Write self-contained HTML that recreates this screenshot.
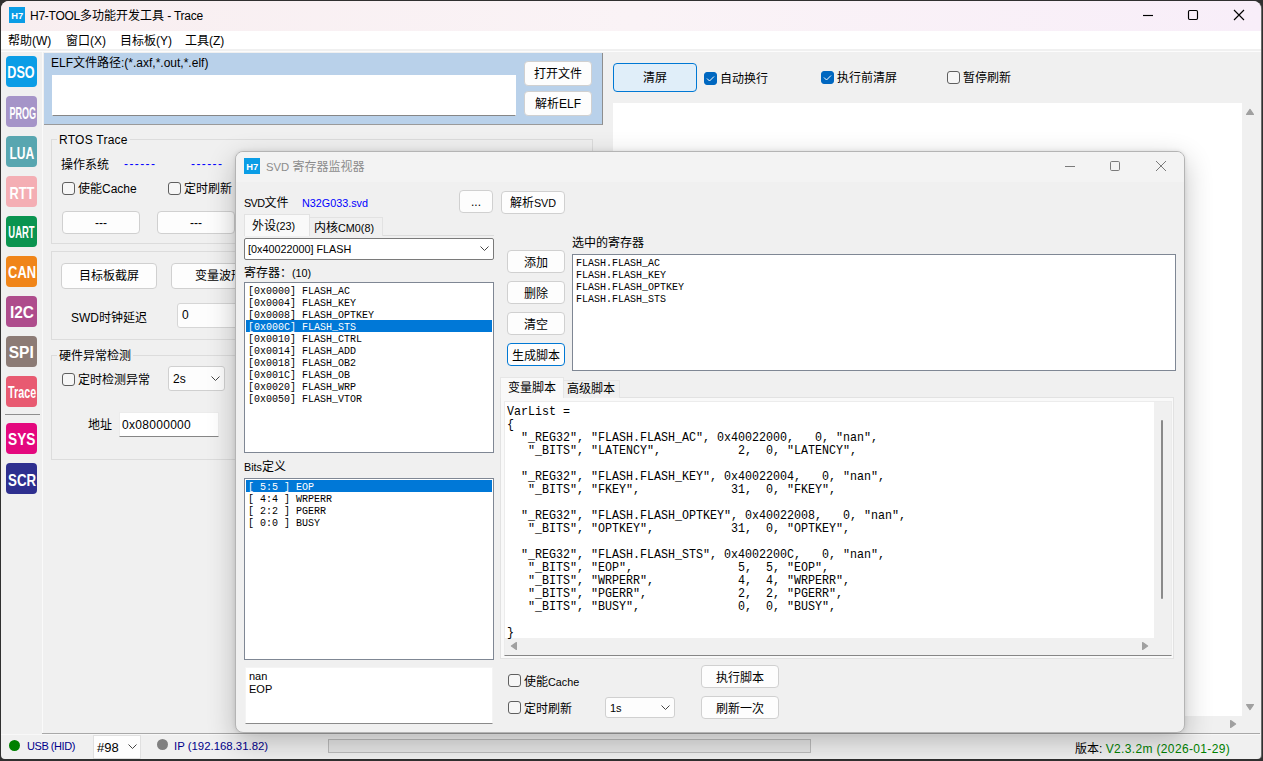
<!DOCTYPE html>
<html lang="zh-CN">
<head>
<meta charset="utf-8">
<title>H7-TOOL多功能开发工具 - Trace</title>
<style>
*{box-sizing:border-box;margin:0;padding:0}
html,body{width:1263px;height:761px;overflow:hidden;background:#303030}
body{font-family:"Liberation Sans","Noto Sans CJK SC",sans-serif;font-size:12px;color:#000;position:relative}
.a{position:absolute}
.t{position:absolute;white-space:nowrap;line-height:16px;height:16px;margin-top:1px}
.d{font-size:10.8px}
.c{font-size:12px;letter-spacing:0}
#win{left:1px;top:1px;width:1260px;height:758px;box-shadow:1px 0 0 #6c6c6c;background:#f0f0f0;border-radius:8px 8px 4px 4px}
#tbar{left:1px;top:1px;width:1260px;height:30px;border-radius:8px 8px 0 0;background:linear-gradient(90deg,#f8eef0,#faf3f6 50%,#f8eef9)}
#menu{left:1px;top:31px;width:1260px;height:18px;background:#fff}
.btn{position:absolute;background:#fdfdfd;border:1px solid #d0d0d0;border-radius:4px;text-align:center;white-space:nowrap;padding-top:1px}
.btn.f{border-color:#0078d4;background:#e0eef9}
.inp{position:absolute;background:#fff;border:1px solid #ececec;border-bottom:1px solid #868686;white-space:nowrap}
.cb{position:absolute;width:13px;height:13px;border:1px solid #5f5f5f;border-radius:3px;background:#f6f6f6}
.cb.on{background:#0067c0;border-color:#0067c0}
.grp{position:absolute;border:1px solid #dcdcdc}
.ico{position:absolute;left:6px;width:31px;height:31px;border-radius:4px}
.ico svg{position:absolute;left:0;top:0}
.ico text{font-family:"Liberation Sans",sans-serif;font-weight:bold;fill:#fff}
.lb{position:absolute;background:#fff;border:1px solid #7f8794;overflow:hidden}
.li{position:absolute;white-space:pre;font-family:"Liberation Mono",monospace;font-size:11px;line-height:12px;height:12px;transform-origin:0 0;transform:scaleX(.9089)}
.li.sc{font-size:13px;line-height:13px;height:13px;transform:scaleX(.8974)}
.sel{position:absolute;background:#0078d7;height:12px}
.navy{color:#00008b}
#dlg{left:235px;top:151px;width:950px;height:582px;background:#f0f0f0;border:1px solid #b4b4b4;border-radius:8px;box-shadow:0 9px 28px rgba(0,0,0,.24),0 0 4px rgba(0,0,0,.10)}
</style>
</head>
<body>
<div id="win" class="a"></div><div id="tbar" class="a"></div><div id="menu" class="a"></div>
<div class="a" style="left:9px;top:7px;width:16px;height:16px;background:#0a9de6"></div>
<svg class="a" style="left:9px;top:7px" width="16" height="16"><text x="8.200" y="12" text-anchor="middle" textLength="12" lengthAdjust="spacingAndGlyphs" style="font:bold 9.5px 'Liberation Sans',sans-serif;fill:#fff">H7</text></svg>
<div class="t" style="left:30px;top:7px;letter-spacing:-.25px">H7-TOOL<span class="c">多功能开发工具</span> - Trace</div>
<svg class="a" style="left:1140px;top:5px" width="115" height="22" fill="none" stroke="#000" stroke-width="1.15">
 <path d="M3 10.500h10"/><rect x="48.500" y="5.500" width="9" height="9" rx="1.2"/><path d="M94 5l10 10M104 5l-10 10"/></svg>
<div class="t" style="left:8px;top:32px">帮助(W)</div>
<div class="t" style="left:66px;top:32px">窗口(X)</div>
<div class="t" style="left:120px;top:32px">目标板(Y)</div>
<div class="t" style="left:185px;top:32px">工具(Z)</div>
<div class="ico" style="top:56px;background:#0a9de6"><svg width="31" height="31"><text x="15" y="22" text-anchor="middle" textLength="27.3" lengthAdjust="spacingAndGlyphs" font-size="16.5">DSO</text></svg></div>
<div class="ico" style="top:96px;background:#a594c8"><svg width="31" height="31"><text x="16.8" y="22.7" text-anchor="middle" textLength="26.7" lengthAdjust="spacingAndGlyphs" font-size="16.5">PROG</text></svg></div>
<div class="ico" style="top:136px;background:#58a6b0"><svg width="31" height="31"><text x="15.9" y="23" text-anchor="middle" textLength="24.8" lengthAdjust="spacingAndGlyphs" font-size="16.5">LUA</text></svg></div>
<div class="ico" style="top:176px;background:#f4aeb4"><svg width="31" height="31"><text x="15.9" y="23" text-anchor="middle" textLength="24.8" lengthAdjust="spacingAndGlyphs" font-size="16.5">RTT</text></svg></div>
<div class="ico" style="top:216px;background:#0a9450"><svg width="31" height="31"><text x="15.5" y="21.6" text-anchor="middle" textLength="26.3" lengthAdjust="spacingAndGlyphs" font-size="16.5">UART</text></svg></div>
<div class="ico" style="top:256px;background:#f08519"><svg width="31" height="31"><text x="16.1" y="22.4" text-anchor="middle" textLength="28" lengthAdjust="spacingAndGlyphs" font-size="16.5">CAN</text></svg></div>
<div class="ico" style="top:296px;background:#ae4c8c"><svg width="31" height="31"><text x="16" y="22.4" text-anchor="middle" textLength="24" lengthAdjust="spacingAndGlyphs" font-size="16.5">I2C</text></svg></div>
<div class="ico" style="top:336px;background:#8c7b75"><svg width="31" height="31"><text x="15.25" y="21.6" text-anchor="middle" textLength="25" lengthAdjust="spacingAndGlyphs" font-size="16.5">SPI</text></svg></div>
<div class="ico" style="top:376px;background:#e85a71"><svg width="31" height="31"><text x="16.1" y="21.6" text-anchor="middle" textLength="28" lengthAdjust="spacingAndGlyphs" font-size="16.5">Trace</text></svg></div>
<div class="a" style="left:5px;top:414px;width:35px;height:1px;background:#8f8f8f"></div>
<div class="ico" style="top:423px;background:#e4087e"><svg width="31" height="31"><text x="15.7" y="22" text-anchor="middle" textLength="27.4" lengthAdjust="spacingAndGlyphs" font-size="16.5">SYS</text></svg></div>
<div class="ico" style="top:463px;background:#2e2f8f"><svg width="31" height="31"><text x="16.1" y="23" text-anchor="middle" textLength="28" lengthAdjust="spacingAndGlyphs" font-size="16.5">SCR</text></svg></div>
<div class="a" style="left:1px;top:51px;width:1260px;height:1px;background:#fcfcfc"></div>
<div class="a" style="left:42px;top:52px;width:1px;height:682px;background:#fafafa"></div>
<div class="a" style="left:44px;top:53px;width:559px;height:72px;background:#b9d1ea;border-right:1px solid #8e8e8e;border-bottom:1px solid #9a9a9a"></div>
<div class="t" style="left:51px;top:54px">ELF文件路径:(*.axf,*.out,*.elf)</div>
<div class="inp" style="left:52px;top:75px;width:464px;height:41px;border-color:#fff #fff #868686"></div>
<div class="btn" style="left:524px;top:61px;width:68px;height:25px;line-height:22px">打开文件</div>
<div class="btn" style="left:524px;top:91px;width:68px;height:25px;line-height:22px">解析ELF</div>
<div class="grp" style="left:51px;top:139px;width:542px;height:105px"></div>
<div class="t" style="left:57px;top:131px;background:#f0f0f0;padding:0 2px;letter-spacing:.25px">RTOS Trace</div>
<div class="t" style="left:61px;top:156px">操作系统</div>
<div class="t" style="left:124px;top:155px;color:#0000ff;letter-spacing:1.4px">------</div>
<div class="t" style="left:191px;top:155px;color:#0000ff;letter-spacing:1.4px">------</div>
<div class="cb" style="left:62px;top:182px"></div>
<div class="t" style="left:78px;top:180px">使能Cache</div>
<div class="cb" style="left:168px;top:182px"></div>
<div class="t" style="left:184px;top:180px">定时刷新</div>
<div class="btn" style="left:62px;top:211px;width:78px;height:23px;line-height:20px">---</div>
<div class="btn" style="left:157px;top:211px;width:78px;height:23px;line-height:20px">---</div>
<div class="grp" style="left:51px;top:251px;width:542px;height:89px"></div>
<div class="btn" style="left:61px;top:263px;width:96px;height:26px;line-height:23px">目标板截屏</div>
<div class="btn" style="left:171px;top:263px;width:96px;height:26px;line-height:23px">变量波形</div>
<div class="t" style="left:71px;top:309px">SWD时钟延迟</div>
<div class="inp" style="left:177px;top:303px;width:90px;height:25px;line-height:22px;padding-left:4px;border:1px solid #d6d6d6;border-radius:3px;background:#fdfdfd">0</div>
<div class="grp" style="left:51px;top:355px;width:542px;height:105px"></div>
<div class="t" style="left:57px;top:347px;background:#f0f0f0;padding:0 2px">硬件异常检测</div>
<div class="cb" style="left:62px;top:373px"></div>
<div class="t" style="left:78px;top:371px">定时检测异常</div>
<div class="btn" style="left:168px;top:366px;width:57px;height:25px;line-height:22px;text-align:left;padding-left:4px;border-radius:3px">2s</div>
<svg class="a" style="left:211px;top:376px" width="10" height="6" fill="none" stroke="#444" stroke-width="1"><path d="M.5 .5l4 4 4-4"/></svg>
<div class="t" style="left:88px;top:416px">地址</div>
<div class="inp" style="left:119px;top:412px;width:100px;height:25px;line-height:24px;padding-left:2px;letter-spacing:.3px">0x08000000</div>
<div class="btn f" style="left:613px;top:63px;width:84px;height:29px;line-height:26px">清屏</div>
<div class="cb on" style="left:704px;top:72px"></div>
<svg class="a" style="left:704px;top:72px" width="13" height="13" fill="none" stroke="#fff" stroke-width="1"><path d="M3 6.500l2.500 2.500 4.500-4.500"/></svg>
<div class="t" style="left:720px;top:70px">自动换行</div>
<div class="cb on" style="left:821px;top:71px"></div>
<svg class="a" style="left:821px;top:71px" width="13" height="13" fill="none" stroke="#fff" stroke-width="1"><path d="M3 6.500l2.500 2.500 4.500-4.500"/></svg>
<div class="t" style="left:837px;top:69px">执行前清屏</div>
<div class="cb" style="left:947px;top:71px"></div>
<div class="t" style="left:963px;top:69px">暂停刷新</div>
<div class="a" style="left:613px;top:103px;width:629px;height:613px;background:#fff"></div>
<svg class="a" style="left:1243px;top:103px" width="17" height="630" fill="#a0a0a0" stroke="#a0a0a0" stroke-width="1.2" stroke-linejoin="round"><path d="M3.600 11.400l3.400-5 3.400 5zM3.600 601.600l3.400 5 3.400-5z"/></svg>
<svg class="a" style="left:1224px;top:717px" width="20" height="17" fill="#a0a0a0" stroke="#a0a0a0" stroke-width="1.2" stroke-linejoin="round"><path d="M6.600 3.600l5 3.400-5 3.400z"/></svg>
<div class="a" style="left:42px;top:733px;width:1218px;height:1px;background:#a8a8a8"></div>
<div class="a" style="left:1px;top:734px;width:1260px;height:1px;background:#f8f8f8"></div>
<div class="a" style="left:9px;top:740px;width:11px;height:11px;border-radius:50%;background:#008000"></div>
<div class="t navy" style="left:27px;top:737px;font-size:11px;letter-spacing:-.45px">USB (HID)</div>
<div class="a" style="left:93px;top:735px;width:48px;height:24px;background:#fdfdfd;border:1px solid #e0e0e0"></div>
<div class="t" style="left:97px;top:739px;font-size:13px">#98</div>
<svg class="a" style="left:128px;top:744px" width="10" height="6" fill="none" stroke="#444" stroke-width="1"><path d="M.5 .5l4 4 4-4"/></svg>
<div class="a" style="left:157px;top:739px;width:11px;height:11px;border-radius:50%;background:#808080"></div>
<div class="t navy" style="left:174px;top:737px;font-size:11.4px">IP (192.168.31.82)</div>
<div class="a" style="left:328px;top:739px;width:483px;height:14px;background:#e6e6e6;border:1px solid #bcbcbc"></div>
<div class="t" style="left:1075px;top:740px">版本: <span style="color:#008000;letter-spacing:.35px">V2.3.2m (2026-01-29)</span></div>
<div id="dlg" class="a"></div>
<div class="a" style="left:236px;top:152px;width:948px;height:30px;background:#f3f3f3;border-radius:7px 7px 0 0"></div>
<div class="a" style="left:244px;top:158px;width:16px;height:16px;background:#0a9de6"></div>
<svg class="a" style="left:244px;top:158px" width="16" height="16"><text x="8.200" y="12" text-anchor="middle" textLength="12" lengthAdjust="spacingAndGlyphs" style="font:bold 9.5px 'Liberation Sans',sans-serif;fill:#fff">H7</text></svg>
<div class="t" style="left:266px;top:158px;color:#8c8c8c;font-size:11.3px">SVD <span class="c">寄存器监视器</span></div>
<svg class="a" style="left:1060px;top:156px" width="115" height="22" fill="none" stroke="#7a7a7a" stroke-width="1">
 <path d="M5 10.500h10"/><rect x="50.500" y="5.500" width="9" height="9" rx="1.2"/><path d="M96 5l10 10M106 5l-10 10"/></svg>
<div class="t d" style="left:244px;top:194px"><span style="letter-spacing:-.6px">SVD</span><span class="c">文件</span></div>
<div class="t d" style="left:302px;top:194px;color:#0000ff">N32G033.svd</div>
<div class="btn" style="left:459px;top:190px;width:34px;height:23px;line-height:20px">...</div>
<div class="btn d" style="left:501px;top:191px;width:64px;height:23px;line-height:20px"><span class="c">解析</span>SVD</div>
<div class="a" style="left:244px;top:235px;width:250px;height:1px;background:#dcdcdc"></div>
<div class="a" style="left:308px;top:217px;width:75px;height:19px;border:1px solid #e2e2e2;border-bottom:none;background:#f0f0f0"></div>
<div class="a" style="left:244px;top:214px;width:66px;height:22px;background:#f9f9f9;border:1px solid #e2e2e2;border-bottom:none"></div>
<div class="t d" style="left:252px;top:217px"><span class="c">外设</span>(23)</div>
<div class="t d" style="left:314px;top:219px"><span class="c">内核</span>CM0(8)</div>
<div class="a" style="left:244px;top:238px;width:250px;height:22px;background:#fff;border:1px solid #7a7a7a;border-radius:2px"></div>
<div class="t d" style="left:248px;top:240px">[0x40022000] FLASH</div>
<svg class="a" style="left:480px;top:246px" width="10" height="6" fill="none" stroke="#444" stroke-width="1"><path d="M.5 .5l4 4 4-4"/></svg>
<div class="t d" style="left:244px;top:264px"><span class="c">寄存器：</span>(10)</div>
<div class="lb" style="left:244px;top:282px;width:250px;height:171px"></div>
<div class="sel" style="left:246px;top:320px;width:246px"></div>
<div class="li" style="left:248px;top:284.5px;color:#000">[0x0000] FLASH_AC</div>
<div class="li" style="left:248px;top:296.5px;color:#000">[0x0004] FLASH_KEY</div>
<div class="li" style="left:248px;top:308.5px;color:#000">[0x0008] FLASH_OPTKEY</div>
<div class="li" style="left:248px;top:320.5px;color:#fff">[0x000C] FLASH_STS</div>
<div class="li" style="left:248px;top:332.5px;color:#000">[0x0010] FLASH_CTRL</div>
<div class="li" style="left:248px;top:344.5px;color:#000">[0x0014] FLASH_ADD</div>
<div class="li" style="left:248px;top:356.5px;color:#000">[0x0018] FLASH_OB2</div>
<div class="li" style="left:248px;top:368.5px;color:#000">[0x001C] FLASH_OB</div>
<div class="li" style="left:248px;top:380.5px;color:#000">[0x0020] FLASH_WRP</div>
<div class="li" style="left:248px;top:392.5px;color:#000">[0x0050] FLASH_VTOR</div>
<div class="t d" style="left:244px;top:458px">Bits<span class="c">定义</span></div>
<div class="lb" style="left:244px;top:478px;width:250px;height:182px"></div>
<div class="sel" style="left:246px;top:480px;width:246px"></div>
<div class="li" style="left:248px;top:480.5px;color:#fff">[ 5:5 ] EOP</div>
<div class="li" style="left:248px;top:492.5px;color:#000">[ 4:4 ] WRPERR</div>
<div class="li" style="left:248px;top:504.5px;color:#000">[ 2:2 ] PGERR</div>
<div class="li" style="left:248px;top:516.5px;color:#000">[ 0:0 ] BUSY</div>
<div class="inp" style="left:245px;top:667px;width:248px;height:57px;border-color:#f4f4f4 #f4f4f4 #8a8a8a"></div>
<div class="t" style="left:249px;top:669px;font-size:11px;line-height:13px">nan</div>
<div class="t" style="left:249px;top:682px;font-size:11px;line-height:13px">EOP</div>
<div class="btn" style="left:507px;top:250px;width:58px;height:23px;line-height:20px;padding-top:2px">添加</div>
<div class="btn" style="left:507px;top:281px;width:58px;height:23px;line-height:20px;padding-top:2px">删除</div>
<div class="btn" style="left:507px;top:312px;width:58px;height:23px;line-height:20px;padding-top:2px">清空</div>
<div class="btn f" style="left:507px;top:343px;width:58px;height:23px;line-height:20px;background:#fdfdfd;padding-top:2px">生成脚本</div>
<div class="t d" style="left:572px;top:234px"><span class="c">选中的寄存器</span></div>
<div class="lb" style="left:572px;top:254px;width:604px;height:117px"></div>
<div class="li" style="left:576px;top:256.5px;color:#000">FLASH.FLASH_AC</div>
<div class="li" style="left:576px;top:268.5px;color:#000">FLASH.FLASH_KEY</div>
<div class="li" style="left:576px;top:280.5px;color:#000">FLASH.FLASH_OPTKEY</div>
<div class="li" style="left:576px;top:292.5px;color:#000">FLASH.FLASH_STS</div>
<div class="a" style="left:500px;top:397px;width:674px;height:262px;border:1px solid #e2e2e2;background:#f9f9f9"></div>
<div class="a" style="left:563px;top:380px;width:57px;height:18px;border:1px solid #e6e6e6;border-bottom:none;background:#f0f0f0"></div>
<div class="a" style="left:500px;top:377px;width:64px;height:21px;background:#f9f9f9;border:1px solid #e6e6e6;border-bottom:none"></div>
<div class="t d" style="left:508px;top:379px"><span class="c">变量脚本</span></div>
<div class="t d" style="left:567px;top:380px"><span class="c">高级脚本</span></div>
<div class="a" style="left:504px;top:401px;width:668px;height:255px;background:#f0f0f0;border:1px solid #ececec;border-bottom:1px solid #868686"></div>
<div class="a" style="left:505px;top:402px;width:649px;height:236px;background:#fff"></div>
<div class="li sc" style="left:507px;top:405px;color:#000">VarList =</div>
<div class="li sc" style="left:507px;top:418px;color:#000">{</div>
<div class="li sc" style="left:507px;top:431px;color:#000">  "_REG32", "FLASH.FLASH_AC", 0x40022000,   0, "nan",</div>
<div class="li sc" style="left:507px;top:444px;color:#000">   "_BITS", "LATENCY",           2,  0, "LATENCY",</div>
<div class="li sc" style="left:507px;top:470px;color:#000">  "_REG32", "FLASH.FLASH_KEY", 0x40022004,   0, "nan",</div>
<div class="li sc" style="left:507px;top:483px;color:#000">   "_BITS", "FKEY",             31,  0, "FKEY",</div>
<div class="li sc" style="left:507px;top:509px;color:#000">  "_REG32", "FLASH.FLASH_OPTKEY", 0x40022008,   0, "nan",</div>
<div class="li sc" style="left:507px;top:522px;color:#000">   "_BITS", "OPTKEY",           31,  0, "OPTKEY",</div>
<div class="li sc" style="left:507px;top:548px;color:#000">  "_REG32", "FLASH.FLASH_STS", 0x4002200C,   0, "nan",</div>
<div class="li sc" style="left:507px;top:561px;color:#000">   "_BITS", "EOP",               5,  5, "EOP",</div>
<div class="li sc" style="left:507px;top:574px;color:#000">   "_BITS", "WRPERR",            4,  4, "WRPERR",</div>
<div class="li sc" style="left:507px;top:587px;color:#000">   "_BITS", "PGERR",             2,  2, "PGERR",</div>
<div class="li sc" style="left:507px;top:600px;color:#000">   "_BITS", "BUSY",              0,  0, "BUSY",</div>
<div class="li sc" style="left:507px;top:626px;color:#000">}</div>
<div class="a" style="left:1161px;top:420px;width:2px;height:179px;background:#8a8a8a;border-radius:1px"></div>
<svg class="a" style="left:505px;top:638px" width="649" height="16" fill="#a0a0a0" stroke="#a0a0a0" stroke-width="1.2" stroke-linejoin="round"><path d="M11.400 4.600l-5 3.400 5 3.400zM637.600 4.600l5 3.400-5 3.400z"/></svg>
<div class="cb" style="left:508px;top:674px"></div>
<div class="t d" style="left:524px;top:673px"><span class="c">使能</span>Cache</div>
<div class="cb" style="left:508px;top:701px"></div>
<div class="t d" style="left:524px;top:700px"><span class="c">定时刷新</span></div>
<div class="btn" style="left:605px;top:697px;width:70px;height:21px;line-height:18px;text-align:left;padding-left:4px;border-radius:3px;font-size:11px">1s</div>
<svg class="a" style="left:661px;top:705px" width="10" height="6" fill="none" stroke="#444" stroke-width="1"><path d="M.5 .5l4 4 4-4"/></svg>
<div class="btn" style="left:701px;top:665px;width:78px;height:23px;line-height:20px;padding-top:2px">执行脚本</div>
<div class="btn" style="left:701px;top:696px;width:78px;height:23px;line-height:20px;padding-top:2px">刷新一次</div>
</body>
</html>
